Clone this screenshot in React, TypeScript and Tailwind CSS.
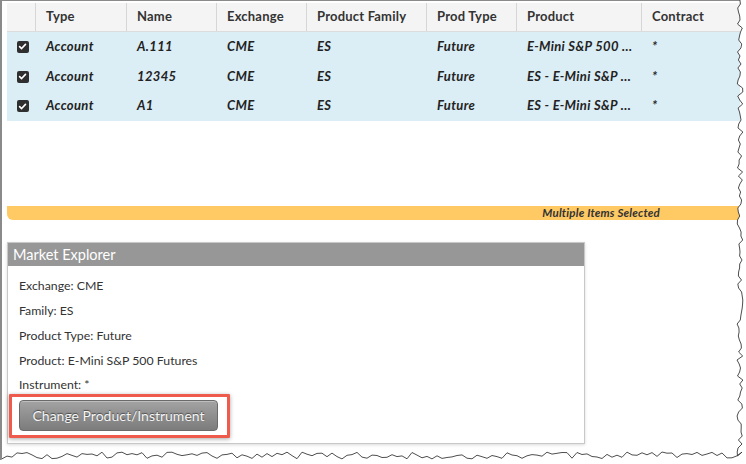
import React from 'react'

const COLS = ['Type', 'Name', 'Exchange', 'Product Family', 'Prod Type', 'Product', 'Contract']

const ROWS = [
  ['Account', 'A.111', 'CME', 'ES', 'Future', 'E-Mini S&P 500 ...', '*'],
  ['Account', '12345', 'CME', 'ES', 'Future', 'ES - E-Mini S&P ...', '*'],
  ['Account', 'A1', 'CME', 'ES', 'Future', 'ES - E-Mini S&P ...', '*'],
]

const DETAILS = [
  'Exchange: CME',
  'Family: ES',
  'Product Type: Future',
  'Product: E-Mini S&P 500 Futures',
  'Instrument: *',
]

const GRID = 'grid grid-cols-[29px_91px_90px_90px_120px_90px_125px_1fr]'

// simple seeded jitter for the torn paper edge
function jitter(seed: number) {
  let s = seed
  return () => {
    s = (s * 9301 + 49297) % 233280
    return s / 233280
  }
}

function TornEdge() {
  const rnd = jitter(7)
  const right: string[] = []
  for (let y = 0; y <= 456; y += 4) {
    right.push(`${(737 + rnd() * 6).toFixed(1)},${y}`)
  }
  const bottom: string[] = []
  for (let x = 742; x >= 0; x -= 5) {
    bottom.push(`${x},${(452 + rnd() * 7).toFixed(1)}`)
  }
  const line = [...right, ...bottom].join(' ')
  const fill = `746,0 ${line} 0,464 746,464`
  return (
    <svg className="absolute inset-0 pointer-events-none" width={746} height={464}>
      <polygon points={fill} fill="#ffffff" />
      <polyline points={line} fill="none" stroke="#3a3a3a" strokeWidth={0.9} />
    </svg>
  )
}

function Check() {
  return (
    <span className="w-[12px] h-[12px] rounded-[2px] bg-[#2f2f2f] flex items-center justify-center">
      <svg width="9" height="9" viewBox="0 0 10 10">
        <path d="M1.8 5.2 L4 7.3 L8.3 2.6" fill="none" stroke="#fff" strokeWidth="1.8" strokeLinecap="round" strokeLinejoin="round" />
      </svg>
    </span>
  )
}

export default function App() {
  return (
    <div className="relative w-[746px] h-[464px] bg-white overflow-hidden font-['Lato',sans-serif]">
      <div className="w-[740px] h-[460px] border-l-2 border-t border-[#8a8a8a] pl-[5px] pt-[2px]">
        {/* grid header */}
        <div className={`${GRID} h-[29px] bg-[#f4f4f4] border-b border-[#dcdcdc] text-[13px] font-bold text-[#333] tracking-[0.2px]`}>
          <div className="border-r border-[#d6d6d6]" />
          {COLS.map((c) => (
            <div key={c} className="flex items-center pl-[10px] border-r border-[#d6d6d6] last:border-r-0">
              {c}
            </div>
          ))}
        </div>

        {/* rows */}
        <div className="bg-[#dbedf5]">
          {ROWS.map((r, i) => (
            <div key={i} className={`${GRID} h-[29.7px] text-[13px] font-bold italic text-[#222] tracking-[0.35px]`}>
              <div className="flex items-center justify-center pl-[2px]">
                <Check />
              </div>
              {r.map((v, j) => (
                <div key={j} className="flex items-center pl-[10px] whitespace-nowrap">
                  {v}
                </div>
              ))}
            </div>
          ))}
        </div>

        <div className="h-[85px]" />

        <div className="h-[14px] bg-[#ffc964] rounded-bl-[6px] flex items-center justify-end pr-[80px] text-[11.5px] font-bold italic text-[#333] tracking-[0.2px]">
          Multiple Items Selected
        </div>

        {/* market explorer */}
        <div className="relative mt-[22px] w-[578px] h-[202px] border border-[#c8c8c8] shadow-[0_1px_3px_rgba(0,0,0,0.15)]">
          <div className="h-[23px] bg-[#979797] text-white text-[14.5px] pl-[5px] flex items-center">
            Market Explorer
          </div>
          <div className="pl-[11px] pt-[8px] text-[12.3px] text-[#333]">
            {DETAILS.map((d) => (
              <div key={d} className="h-[24.8px] flex items-center">
                {d}
              </div>
            ))}
            <button className="mt-[2px] w-[199px] h-[31px] rounded-[4px] border border-[#6a6a6a] bg-gradient-to-b from-[#a3a3a3] to-[#7c7c7c] text-[14px] text-[#f5f5f5] [text-shadow:0_-1px_1px_rgba(0,0,0,0.5)] shadow-[inset_0_1px_0_rgba(255,255,255,0.3)]">
              Change Product/Instrument
            </button>
          </div>
          <div className="absolute left-[1px] top-[151px] w-[221px] h-[44px] border-[3px] border-[#ee5a4b] rounded-[1px] shadow-[0_1px_4px_rgba(0,0,0,0.35)]" />
        </div>
      </div>
      <TornEdge />
    </div>
  )
}
